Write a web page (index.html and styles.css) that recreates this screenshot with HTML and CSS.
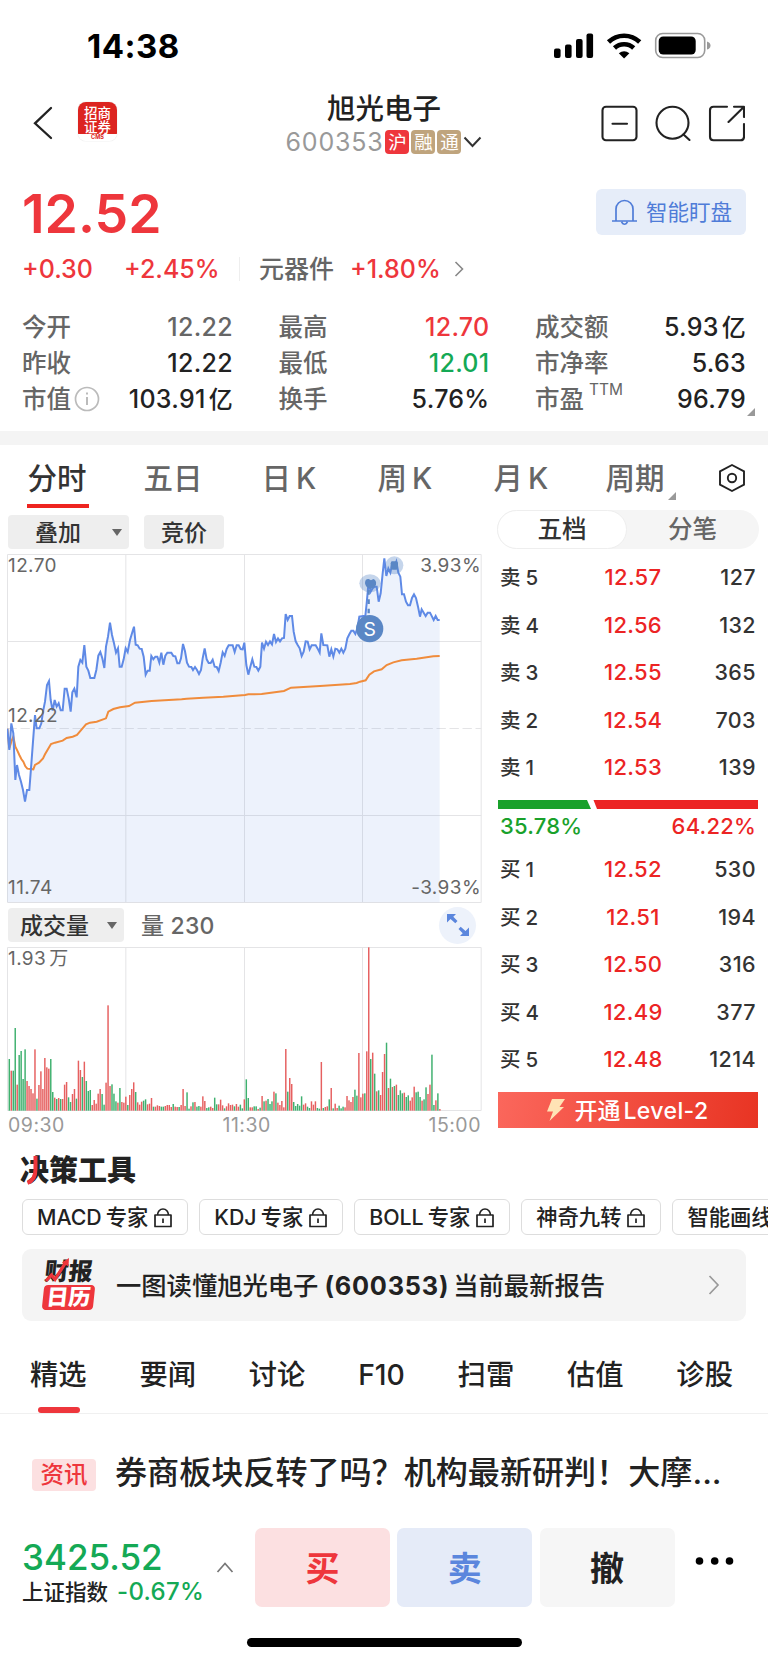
FILE: index.html
```html
<!DOCTYPE html>
<html lang="zh-CN">

<head>
    <meta charset="UTF-8">
    <title>旭光电子 600353</title>
    <link rel="stylesheet" href="styles.css">
</head>

<body>
    <header class="status">
        <span class="time">14:38</span>
        <svg class="status-icons" width="158" height="28" viewBox="0 0 158 28">
            <rect x="0" y="16.5" width="6.6" height="9.5" rx="2" />
            <rect x="11" y="12.5" width="6.6" height="13.5" rx="2" />
            <rect x="22" y="7" width="6.6" height="19" rx="2" />
            <rect x="32.5" y="1.5" width="6.6" height="24.5" rx="2" />
            <g fill="none" stroke="#000" stroke-width="4.6">
                <path d="M54.5 10A22.5 22.5 0 0 1 85.7 10" />
                <path d="M60.5 16A14 14 0 0 1 79.7 16" />
            </g>
            <path d="M64.8 21.3Q70.1 17 75.4 21.3L70.1 26.5Z" />
            <rect x="101.7" y="1.5" width="49" height="24" rx="7" fill="none" stroke="#9a9a9a" stroke-width="1.6" />
            <rect x="104.7" y="4.5" width="37" height="18" rx="4.5" />
            <path d="M153 9.5Q156.5 10.5 156.5 13.5Q156.5 16.5 153 17.5Z" fill="#9a9a9a" />
        </svg>
    </header>

    <header class="navbar">
        <div class="nav-left">
            <svg width="20" height="34" viewBox="0 0 20 34">
                <path d="M18 2L2 17.3L18 32" fill="none" stroke="#222" stroke-width="2.3" stroke-linecap="round" />
            </svg>
            <div class="logo">
                <p>招商</p>
                <p>证券</p>
                <small>CMS</small>
            </div>
        </div>
        <div class="stock">
            <h1>旭光电子</h1>
            <div class="code">
                <span>600353</span>
                <i class="red">沪</i><i>融</i><i>通</i>
                <svg width="19" height="12" viewBox="0 0 19 12">
                    <path d="M1.5 1.5L9.5 10L17.5 1.5" fill="none" stroke="#333" stroke-width="2" />
                </svg>
            </div>
        </div>
        <svg class="nav-icons" width="144" height="38" viewBox="0 0 144 38">
            <g fill="none" stroke="#222" stroke-width="2.1" stroke-linecap="round" stroke-linejoin="round">
                <rect x="1.5" y="1.8" width="34" height="33.5" rx="3.5" />
                <path d="M11.5 18.7H26" />
                <circle cx="71.5" cy="17.8" r="16" />
                <path d="M82.5 29.5L88.5 35" />
                <path d="M126 1.8H112.5Q109 1.8 109 5.3V31.8Q109 35.3 112.5 35.3H139.5Q143 35.3 143 31.8V19" />
                <path d="M133 1.8H143V12M142.5 2.3L127.5 17" />
            </g>
        </svg>
    </header>

    <section class="quote">
        <div class="quote-top">
            <p class="price up">12.52</p>
            <button class="watch">
                <svg width="27" height="28" viewBox="0 0 27 28">
                    <path d="M1 23H26M5 22.5V11A8.5 8.5 0 0 1 22 11V22.5M10.5 24Q13.5 28.5 16.5 24" fill="none" stroke="#4f7cd8" stroke-width="1.7" />
                </svg>
                <span>智能盯盘</span>
            </button>
        </div>
        <div class="change">
            <b class="up">+0.30</b>
            <b class="up">+2.45%</b>
            <span class="sector">元器件</span>
            <b class="up">+1.80%</b>
            <svg width="10" height="16" viewBox="0 0 10 16">
                <path d="M1.5 1L8.5 8L1.5 15" fill="none" stroke="#888" stroke-width="1.6" />
            </svg>
        </div>
        <div class="facts">
            <p><span>今开</span><b class="flat">12.22</b></p>
            <p><span>最高</span><b class="up">12.70</b></p>
            <p><span>成交额</span><b>5.93<em>亿</em></b></p>
            <p><span>昨收</span><b>12.22</b></p>
            <p><span>最低</span><b class="down">12.01</b></p>
            <p><span>市净率</span><b>5.63</b></p>
            <p><span>市值<svg width="26" height="26" viewBox="0 0 26 26">
                        <circle cx="13" cy="13" r="11.5" fill="none" stroke="#bbb" stroke-width="1.7" />
                        <path d="M13 11V19M13 6.5V8.5" stroke="#bbb" stroke-width="2" />
                    </svg></span><b>103.91<em>亿</em></b></p>
            <p><span>换手</span><b>5.76%</b></p>
            <p class="more"><span>市盈<sup>TTM</sup></span><b>96.79</b></p>
        </div>
    </section>

    <nav class="periods">
        <a class="valgt">分时</a>
        <a>五日</a>
        <a>日<span>K</span></a>
        <a>周<span>K</span></a>
        <a>月<span>K</span></a>
        <a class="drop">周期</a>
        <svg width="28" height="30" viewBox="0 0 28 30">
            <path d="M14 2L26 8.3V21.7L14 28L2 21.7V8.3Z" fill="none" stroke="#222" stroke-width="1.9" />
            <circle cx="14" cy="15" r="4.2" fill="none" stroke="#222" stroke-width="1.9" />
        </svg>
    </nav>

    <main>
        <section class="charts">
            <div class="toolbar">
                <button class="overlay"><span>叠加</span><i></i></button>
                <button class="auction"><span>竞价</span></button>
            </div>
            <div class="plot">
                <svg id="price" width="475" height="349" viewBox="21 342 1425 1047">
                    <g class="grid">
                        <path d="M22.5 343.5H1443.5V1387.5H22.5ZM22.5 604.5H1443.5M22.5 1126.5H1443.5M377.5 343.5V1387.5M733.5 343.5V1387.5M1087.5 343.5V1387.5" />
                        <path d="M22.5 865.5H1443.5" stroke-dasharray="28 11" />
                    </g>
                    <polygon class="area" />
                    <polyline class="average" />
                    <polyline class="line" />
                    <g fill="#5a87c5">
                        <ellipse cx="1110" cy="430" rx="32" ry="27" opacity=".35" />
                        <circle cx="1183" cy="376" r="27" opacity=".35" />
                        <path d="M1095 430Q1095 416 1106 417L1113 421L1120 417Q1130 420 1128 434Q1124 444 1112 446Q1097 444 1095 430Z" />
                        <rect x="1172" y="364" width="22" height="25" rx="6" />
                        <path d="M1106 450V520" stroke="#5a87c5" stroke-width="7" stroke-dasharray="14 14" />
                        <circle cx="1109" cy="566" r="41" />
                    </g>
                    <text class="mark" x="1109" y="587">S</text>
                </svg>
                <span class="tl">12.70</span>
                <span class="tr">3.93%</span>
                <span class="ml">12.22</span>
                <span class="bl">11.74</span>
                <span class="br">-3.93%</span>
            </div>
            <div class="toolbar">
                <button class="volume"><span>成交量</span><i></i></button>
                <span class="amount">量 230</span>
                <div class="expand">
                    <svg width="22" height="22" viewBox="0 0 22 22">
                        <path d="M0 0H9L6.3 2.7L10.5 7L8.3 9.3L3.5 5L0 8.5ZM22 22H13L15.7 19.3L11.5 15L13.7 12.7L18.5 17L22 13.5Z" fill="#5b86dd" />
                    </svg>
                </div>
            </div>
            <div class="plot">
                <svg id="bars" width="475" height="164" viewBox="21 171 1425 492">
                    <path class="grid" d="M22.5 172.5H1443.5V661.5H22.5ZM377.5 172.5V661.5M733.5 172.5V661.5M1087.5 172.5V661.5" />
                </svg>
                <span class="tl">1.93<em>万</em></span>
            </div>
            <div class="hours"><span>09:30</span><span>11:30</span><span>15:00</span></div>
        </section>

        <aside class="book">
            <div class="switch"><a class="valgt">五档</a><a>分笔</a></div>
            <ul>
                <li><span>卖<em>5</em></span><b>12.57</b><span>127</span></li>
                <li><span>卖<em>4</em></span><b>12.56</b><span>132</span></li>
                <li><span>卖<em>3</em></span><b>12.55</b><span>365</span></li>
                <li><span>卖<em>2</em></span><b>12.54</b><span>703</span></li>
                <li><span>卖<em>1</em></span><b>12.53</b><span>139</span></li>
            </ul>
            <svg class="ratio" width="260" height="9" viewBox="0 0 260 9">
                <path d="M0 0H89L93 9H0Z" fill="#19a12b" />
                <path d="M95.5 0H260V9H99Z" fill="#ec2424" />
            </svg>
            <div class="percent"><span>35.78%</span><span>64.22%</span></div>
            <ul>
                <li><span>买<em>1</em></span><b>12.52</b><span>530</span></li>
                <li><span>买<em>2</em></span><b>12.51</b><span>194</span></li>
                <li><span>买<em>3</em></span><b>12.50</b><span>316</span></li>
                <li><span>买<em>4</em></span><b>12.49</b><span>377</span></li>
                <li><span>买<em>5</em></span><b>12.48</b><span>1214</span></li>
            </ul>
            <button class="level2">
                <svg width="18" height="22" viewBox="0 0 18 22">
                    <path d="M5 0H18L12.5 8H17L2.5 22L6 12.5H0Z" fill="#ffe3b5" />
                </svg>
                <span>开通<em>Level-2</em></span>
            </button>
        </aside>
    </main>

    <section class="tools">
        <h2>决策工具<svg width="12" height="29" viewBox="0 0 12 29">
                <path d="M9.500 0V13Q9.500 24 1.500 27" fill="none" stroke="#ee363c" stroke-width="4" />
            </svg></h2>
        <div class="chips">
            <a><span>MACD<em>专家</em></span></a>
            <a><span>KDJ<em>专家</em></span></a>
            <a><span>BOLL<em>专家</em></span></a>
            <a><span>神奇九转</span></a>
            <a><span>智能画线</span></a>
        </div>
        <article class="report">
            <div class="calendar">
                <b>财报</b>
                <strong>日历</strong>
                <svg width="28" height="25" viewBox="0 0 28 25">
                    <path d="M2 23L7.500 17L11 21.500L22 4" fill="none" stroke="#ee363c" stroke-width="3.2" />
                    <path d="M18 4.500L25 0L24.500 8.500Z" fill="#ee363c" />
                </svg>
            </div>
            <p>一图读懂旭光电子<strong>(600353)</strong>当前最新报告</p>
            <svg width="12" height="20" viewBox="0 0 12 20">
                <path d="M1.5 1L10 10L1.5 19" fill="none" stroke="#999" stroke-width="1.7" />
            </svg>
        </article>
    </section>

    <nav class="tabs">
        <a class="valgt">精选</a>
        <a>要闻</a>
        <a>讨论</a>
        <a>F10</a>
        <a>扫雷</a>
        <a>估值</a>
        <a>诊股</a>
    </nav>

    <article class="news">
        <span class="tag">资讯</span>
        <h3>券商板块反转了吗？机构最新研判！大摩...</h3>
    </article>

    <footer>
        <div class="index">
            <p class="points">3425.52</p>
            <p class="name">上证指数<span>-0.67%</span></p>
        </div>
        <svg class="caret" width="18" height="11" viewBox="0 0 18 11">
            <path d="M1.5 10L9 1.5L16.5 10" fill="none" stroke="#777" stroke-width="1.7" />
        </svg>
        <button class="buy">买</button>
        <button class="sell">卖</button>
        <button class="cancel">撤</button>
        <svg class="dots" width="40" height="8" viewBox="0 0 40 8">
            <circle cx="4.5" cy="4" r="3.8" />
            <circle cx="19.7" cy="4" r="3.8" />
            <circle cx="34.5" cy="4" r="3.8" />
        </svg>
    </footer>
    <div class="homebar"></div>

    <svg class="sprite" width="0" height="0">
        <symbol id="lock" viewBox="0 0 18 21">
            <path d="M1 8H17V19.5H1ZM3.5 8A5.5 6 0 0 1 14.5 8M9 11.5V16" fill="none" stroke="#222" stroke-width="1.7" stroke-linejoin="round" />
        </symbol>
    </svg>

    <script src="chart.js"></script>
</body>

</html>
```
FILE: styles.css
```css
* {
    box-sizing: border-box;
    padding: 0;
    margin: 0;
}

body {
    width: 768px;
    height: 1662px;
    overflow: hidden;
    background: #fff;
    color: #222;
    font-family: Inter, "Noto Sans CJK SC", sans-serif;
}

svg {
    display: block;
    flex: none;
}

em,
i {
    font-style: normal;
}

b {
    font-weight: 500;
}

button {
    border: none;
    font-family: inherit;
    color: inherit;
}

ul {
    list-style: none;
}

.up {
    color: #ee363c;
}

.down {
    color: #14a955;
}

.flat {
    color: #666;
}

/* status bar */

.status {
    display: flex;
    justify-content: space-between;
    height: 88px;
    padding: 32px 56px 0 87px;
}

.time {
    font-size: 33px;
    font-weight: 700;
    line-height: 29px;
    letter-spacing: .5px;
    color: #000;
}

/* top navigation */

.navbar {
    display: grid;
    grid-template-columns: 1fr 200px 1fr;
    height: 84px;
    padding: 0 23px;
}

.nav-left {
    display: flex;
    align-items: flex-start;
    gap: 25px;
    padding: 18px 0 0 10px;
}

.logo {
    width: 39px;
    height: 39px;
    margin-top: -4px;
    padding-top: 3px;
    border-radius: 8px;
    box-shadow: 0 0 1px #bbb;
    overflow: hidden;
    text-align: center;
    color: #fff;
    background: linear-gradient(#dc2420 32px, #fff 32px);
}

.logo p {
    font-family: "Noto Sans CJK SC", sans-serif;
    font-size: 13.5px;
    font-weight: 500;
    line-height: 14px;
}

.logo small {
    display: block;
    font-size: 5.5px;
    font-weight: 700;
    line-height: 9px;
    color: #dc2420;
}

.stock {
    display: flex;
    flex-direction: column;
    align-items: center;
}

.stock h1 {
    padding-top: 3px;
    font-size: 28.5px;
    font-weight: 500;
    line-height: 36px;
}

.code {
    display: flex;
    align-items: center;
    gap: 2px;
    height: 30px;
    color: #999;
    font-size: 25px;
    letter-spacing: .8px;
    white-space: nowrap;
}

.code i {
    width: 24px;
    height: 24px;
    border-radius: 4px;
    background: #bfa47d;
    color: #fff;
    font-size: 18.5px;
    letter-spacing: 0;
    line-height: 24px;
    text-align: center;
}

.code .red {
    background: #ee363c;
}

.nav-icons {
    justify-self: end;
    margin-top: 17px;
}

/* quote */

.quote {
    height: 273px;
    padding: 17px 22px 0;
    border-bottom: 14px solid #f4f4f4;
}

.quote-top {
    display: flex;
    justify-content: space-between;
    height: 46px;
}

.price {
    font-size: 53.5px;
    font-weight: 600;
    line-height: 50px;
}

.watch {
    display: flex;
    align-items: center;
    gap: 8px;
    width: 150px;
    padding-left: 15px;
    border-radius: 6px;
    background: #e6edf9;
    color: #4f7cd8;
    font-size: 21.5px;
    white-space: nowrap;
}

.watch span {
    padding-bottom: 3px;
}

.change {
    display: flex;
    align-items: center;
    height: 68px;
    font-size: 25px;
}

.change b:first-child {
    width: 102px;
}

.change b:nth-child(2) {
    width: 115px;
}

.change .sector {
    width: 111px;
    padding-left: 19px;
    color: #666;
    font-weight: 500;
    line-height: 24px;
    border-left: 1px solid #eee;
}

.change svg {
    margin-left: 13px;
}

.facts {
    display: grid;
    grid-template-columns: repeat(3, 211px);
    grid-auto-rows: 36px;
    column-gap: 45.5px;
    padding-top: 6px;
}

.facts p {
    display: flex;
    justify-content: space-between;
    font-size: 25px;
    line-height: 36px;
}

.facts b {
    letter-spacing: .3px;
}

.facts span {
    display: flex;
    align-items: center;
    gap: 3px;
    color: #666;
    font-size: 24.5px;
    font-weight: 500;
}

.facts em {
    margin-left: 3px;
    font-size: 24px;
}

.facts sup {
    align-self: flex-start;
    margin-left: 2px;
    font-size: 15.5px;
    font-weight: 400;
    line-height: 18px;
}

.facts .more {
    position: relative;
}

.more::after,
.drop::after {
    content: "";
    position: absolute;
    right: -9px;
    bottom: 1px;
    border: 4.5px solid #999;
    border-top-color: transparent;
    border-left-color: transparent;
}

/* chart period tabs */

.periods {
    display: grid;
    grid-template-columns: repeat(6, 116px) 72px;
    align-items: center;
    justify-items: center;
    height: 65px;
    color: #666;
    font-size: 29.5px;
    font-weight: 500;
}

.periods a {
    position: relative;
    left: -1px;
    height: 60px;
    line-height: 60px;
}

.periods a span {
    margin-left: 5px;
}

.periods .valgt {
    left: 0;
    color: #333;
    border-bottom: 4px solid #ee2420;
    padding: 0 2.5px 0 .5px;
}

.periods .drop {
    left: -3px;
}

.periods .drop::after {
    bottom: 8px;
    right: -11px;
}

/* charts and order book */

main {
    display: flex;
    justify-content: space-between;
    height: 625px;
    padding: 0 9px 0 7px;
}

.charts {
    width: 475px;
}

.toolbar {
    display: flex;
    align-items: center;
    height: 44px;
    padding-left: 1px;
}

.toolbar button {
    display: flex;
    align-items: center;
    justify-content: space-between;
    height: 34px;
    border-radius: 4px;
    background: #eee;
    color: #333;
    font-size: 23px;
    font-weight: 500;
}

.toolbar button span,
.level2 span {
    padding-bottom: 2px;
}

.toolbar button i {
    border: 5px solid transparent;
    border-top: 7px solid #666;
    border-bottom: 0;
}

.toolbar .overlay {
    width: 121px;
    padding: 0 7px 0 27px;
}

.toolbar .auction {
    width: 80px;
    margin-left: 15px;
    padding-left: 17px;
}

.toolbar .volume {
    width: 116px;
    padding: 0 7px 0 12px;
}

.amount {
    margin-left: 17px;
    padding-bottom: 2px;
    color: #666;
    font-size: 23px;
    font-weight: 500;
    letter-spacing: .2px;
}

.expand {
    display: grid;
    place-items: center;
    width: 37px;
    height: 37px;
    margin: 0 6px 0 auto;
    border-radius: 50%;
    background: #edf2fb;
}

.plot {
    position: relative;
}

.plot span {
    position: absolute;
    left: 1px;
    color: #666;
    font-size: 19px;
    letter-spacing: .4px;
    line-height: 24px;
}

.plot .tl {
    top: 0;
}

.plot em {
    margin-left: 3px;
}

.plot .tr {
    top: 0;
    left: auto;
    right: 1px;
}

.plot .ml {
    top: 150px;
}

.plot .bl {
    bottom: 3px;
}

.plot .br {
    bottom: 3px;
    left: auto;
    right: 1px;
}

.grid {
    fill: none;
    stroke: #e4e4e6;
    stroke-width: 3;
}

.area {
    fill: #5f8ae6;
    fill-opacity: .11;
}

.line,
.average {
    fill: none;
    stroke: #5f8ae6;
    stroke-width: 6;
}

.average {
    stroke: #f08c3c;
}

.mark {
    fill: #fff;
    font-size: 58px;
    text-anchor: middle;
}

.hours {
    display: flex;
    justify-content: space-between;
    padding: 1px 1px 0;
    color: #999;
    font-size: 19.5px;
    letter-spacing: .5px;
    line-height: 26px;
}

.book {
    width: 262px;
}

.switch {
    display: flex;
    height: 39px;
    border-radius: 20px;
    background: #f5f5f5;
    color: #666;
    font-size: 24.5px;
    font-weight: 500;
    line-height: 38px;
}

.switch a {
    width: 131px;
    text-align: center;
}

.switch .valgt {
    width: 130px;
    border: 1px solid #eee;
    border-radius: 20px;
    background: #fff;
    color: #333;
    line-height: 37px;
}

.book ul {
    padding: 5px 3px 0;
}

.book li {
    display: grid;
    grid-template-columns: 102px 62px 1fr;
    height: 47.6px;
    color: #333;
    font-size: 21.5px;
    font-weight: 500;
    line-height: 47.6px;
}

.book li span:first-child {
    font-size: 20.5px;
}

.book li span:last-child {
    letter-spacing: .4px;
    text-align: right;
}

.book li em {
    margin-left: 5px;
}

.book li b {
    color: #ec2424;
    font-size: 22px;
    letter-spacing: .3px;
    text-align: center;
}

.ratio {
    margin: 8px 0 0 1px;
}

.percent {
    display: flex;
    justify-content: space-between;
    padding: 0 3px;
    color: #19a12b;
    font-size: 22px;
    font-weight: 500;
    letter-spacing: .2px;
    line-height: 34px;
}

.percent span:last-child {
    color: #ec2424;
}

.percent + ul {
    padding-top: 3px;
}

.level2 {
    display: flex;
    align-items: center;
    justify-content: center;
    gap: 9px;
    width: 260px;
    height: 36px;
    margin: 8px 0 0 1px;
    background: linear-gradient(100deg, #fb675c, #e83423);
    color: #fff;
    font-size: 23px;
    font-weight: 500;
}

.level2 em {
    margin-left: 3px;
    letter-spacing: .4px;
}

/* decision tools */

.tools h2 {
    position: relative;
    padding: 18px 0 0 20px;
    font-size: 29px;
    font-weight: 900;
    line-height: 35px;
}

.tools h2 svg {
    position: absolute;
    left: 26px;
    top: 21px;
}

.chips {
    display: flex;
    gap: 11px;
    margin-top: 11px;
    padding-left: 22px;
    overflow: hidden;
}

.chips a {
    display: flex;
    flex: none;
    align-items: center;
    gap: 6px;
    height: 36px;
    padding: 0 15px 0 14px;
    border: 1px solid #ddd;
    border-radius: 6px;
    font-size: 21.3px;
    font-weight: 500;
    line-height: 34px;
}

.chips em {
    margin-left: 4px;
}

.report {
    display: flex;
    align-items: center;
    height: 72px;
    margin: 14px 22px 0;
    padding: 0 26px 0 21px;
    border-radius: 9px;
    background: #f4f4f4;
    font-size: 25.3px;
    font-weight: 500;
}

.report p {
    flex: 1;
    padding-bottom: 2px;
    white-space: nowrap;
}

.report p strong {
    margin: 0 4px 0 6px;
    font-weight: 700;
    letter-spacing: .8px;
}

.calendar {
    position: relative;
    width: 51px;
    height: 52px;
    margin-right: 22px;
    font-size: 24px;
    line-height: 26px;
}

.calendar b {
    display: block;
    font-weight: 900;
    transform: skewX(-6deg);
    text-align: center;
}

.calendar strong {
    display: block;
    height: 25px;
    border-radius: 4px;
    background: #ee363c;
    color: #fff;
    font-size: 22px;
    font-weight: 900;
    line-height: 25px;
    text-align: center;
    transform: skewX(-6deg);
}

.calendar svg {
    position: absolute;
    left: 1px;
    top: -1px;
}

/* content tabs */

.tabs {
    display: flex;
    justify-content: space-between;
    height: 93px;
    padding: 0 35px 0 30px;
    border-bottom: 1px solid #f0f0f0;
    font-size: 28.3px;
    font-weight: 500;
    line-height: 108px;
}

.tabs .valgt {
    position: relative;
}

.tabs .valgt::after {
    content: "";
    position: absolute;
    left: 8px;
    bottom: 0;
    width: 42px;
    height: 6px;
    border-radius: 3px;
    background: #ee363c;
}

.news {
    display: flex;
    align-items: center;
    height: 114px;
    padding: 0 32px;
}

.tag {
    width: 64px;
    height: 32px;
    margin: 7px 19px 0 0;
    border-radius: 4px;
    background: #fce0e1;
    color: #ee363c;
    font-size: 23.5px;
    font-weight: 500;
    line-height: 31px;
    text-align: center;
}

.news h3 {
    padding-bottom: 3px;
    font-size: 32.1px;
    font-weight: 500;
    white-space: nowrap;
}

/* trade bar */

footer {
    display: flex;
    height: 79px;
    padding-left: 22px;
}

.index {
    width: 194px;
    padding-top: 8px;
}

.points {
    color: #14a955;
    font-size: 35px;
    font-weight: 500;
    line-height: 42px;
}

.name {
    font-size: 21.5px;
    font-weight: 500;
    line-height: 28px;
    white-space: nowrap;
}

.name span {
    margin-left: 9px;
    color: #14a955;
    font-size: 24px;
    letter-spacing: .3px;
}

.caret {
    margin: 34px 21px 0 0;
}

footer button {
    width: 135px;
    margin-right: 7.3px;
    padding-bottom: 3px;
    border-radius: 7px;
    font-size: 34px;
    font-weight: 700;
}

.buy {
    background: #fce0e1;
    color: #ee363c;
}

.sell {
    background: #e5ebf8;
    color: #5b86dd;
}

.cancel {
    background: #f6f6f6;
}

.dots {
    margin: 29px 0 0 13px;
}

.homebar {
    width: 275px;
    height: 9px;
    margin: 31px auto 0;
    border-radius: 5px;
    background: #000;
}
```
FILE: chart.js
```js
const svgNS = "http://www.w3.org/2000/svg";

// price and average lines, x,y pairs
const price = `22,866 28,930 34,850 40,880 46,1020 51,975 57,1005 63,1025 69,1050 75,1085 81,1050 88,1050 93,985 99,905 105,825
110,865 118,865 124,850 129,815 135,785 141,735 147,723 152,780 158,812 164,780 170,800 176,790 182,811 188,811 194,746
200,746 206,775 212,815 217,757 223,746 230,772 235,680 241,660 247,668 253,615 259,680 265,692 271,714 283,714 289,690
295,647 301,636 307,655 313,684 318,620 324,590 330,548 336,585 342,610 348,638 354,625 359,680 365,680 371,658 377,625
383,636 390,600 396,580 402,560 407,614 413,616 419,626 425,627 431,650 437,704 443,692 449,692 454,648 460,658 466,650
472,650 478,668 484,638 490,674 496,647 502,638 514,638 520,648 526,649 532,670 538,670 543,655 549,612 555,634 561,668
567,680 574,681 579,690 585,681 591,690 597,702 603,690 608,655 614,625 620,658 626,669 632,669 638,659 644,680 650,681
656,693 662,668 668,637 674,648 680,627 686,616 698,616 704,636 710,616 716,616 722,627 728,628 733,608 739,675 745,704
751,680 757,658 763,680 769,681 775,692 781,680 786,608 792,626 798,605 804,615 810,604 816,613 822,582 828,606 834,595
840,604 846,595 852,594 857,522 863,540 869,528 876,528 881,575 887,604 893,615 899,625 905,648 911,635 917,604 923,605
929,628 935,616 947,616 953,626 959,638 964,580 970,615 982,616 988,650 994,628 1000,650 1006,626 1012,628 1018,638
1024,626 1030,638 1036,626 1042,595 1048,583 1054,572 1060,572 1066,582 1072,565 1078,530 1090,528 1096,528 1100,490
1106,425 1112,455 1118,445 1124,440 1130,440 1136,485 1142,460 1148,400 1153,355 1159,408 1165,385 1171,398 1177,370
1183,380 1189,365 1195,398 1201,410 1206,463 1212,463 1218,485 1224,496 1230,496 1236,474 1242,463 1248,474 1254,500
1260,530 1265,508 1271,518 1277,528 1283,518 1290,518 1296,530 1301,540 1307,528 1313,540 1319,540`;

const average = `22,866 28,925 34,905 40,890 46,920 52,932 58,945 64,957 70,965 76,979 82,986 100,988 105,975 117,968 129,955
135,943 153,912 165,908 188,902 200,894 218,890 231,885 247,866 258,853 270,848 290,845 318,835 325,815 340,807 360,802
387,798 405,788 455,783 545,778 560,776 610,773 670,770 735,765 745,763 785,762 852,753 873,743 960,738 1050,732 1070,729
1080,725 1097,721 1108,704 1122,694 1145,688 1160,675 1180,667 1205,661 1250,656 1300,649 1319,648`;

// one bar per minute, g = down, r = up
const volume = `g155 r120 g120 g248 r78 g167 g179 g95 g184 r89 r74 r65 r52 r184 g36 r77 r118 r65 r158 r130 r126 g155 g56 r39 g35
r38 g35 r35 r78 r86 g40 g26 r50 r65 g36 r150 r122 g101 r147 g89 g59 g62 r17 r32 r21 r51 r65 g50 g18 r84 r316 r74 g79 g51 g28
r24 g68 r26 r24 r42 g17 r47 r65 r85 g56 r25 r18 r27 g30 g34 r19 r21 r38 g12 r12 r16 r14 g12 g12 r14 r17 r17 r11 g20 r12 r11
g11 r17 r65 r14 g55 g6 r13 g25 r26 g12 g14 r12 r43 r29 g8 g10 r12 r8 g39 g19 r19 r33 r16 g7 r13 r22 r17 r18 g13 r20 r12 g18
g7 r34 g94 g38 r10 r10 g13 g13 r5 g9 r44 g28 r30 g35 g20 g28 r57 g52 r24 r17 r29 r10 r185 g57 r98 r80 g26 g14 g20 g15 g43
r18 r22 g12 g8 r28 r18 r28 g8 g6 r146 g8 r11 r13 g34 r68 g7 r21 r8 g15 g7 g12 r10 r44 r31 r26 r41 g63 g45 r173 r40 r51 g52
r178 r490 g155 r174 g111 r58 g61 r47 r116 r170 g204 r68 g96 r71 g74 r78 g47 g61 g52 r54 g41 g46 r30 r40 r72 g55 g57 g41 r30
g34 g70 r50 r78 g168 g17 r31 g52 r5`;

document.querySelector(".line").setAttribute("points", price);
document.querySelector(".average").setAttribute("points", average);
document.querySelector(".area").setAttribute("points", price + " 1319,1387 22,1387");

const bars = document.querySelector("#bars");
volume.split(/\s+/).forEach((bar, i) => {
    const height = Number(bar.slice(1));
    const rect = document.createElementNS(svgNS, "rect");
    rect.setAttribute("x", 25.7 + i * 5.925);
    rect.setAttribute("y", 662 - height);
    rect.setAttribute("width", 4.4);
    rect.setAttribute("height", height);
    rect.setAttribute("fill", bar[0] == "g" ? "#3fb06f" : "#e66060");
    bars.appendChild(rect);
});

// padlock on every tool chip
document.querySelectorAll(".chips a").forEach(chip => {
    chip.insertAdjacentHTML("beforeend", '<svg width="18" height="21"><use href="#lock" /></svg>');
});
```
